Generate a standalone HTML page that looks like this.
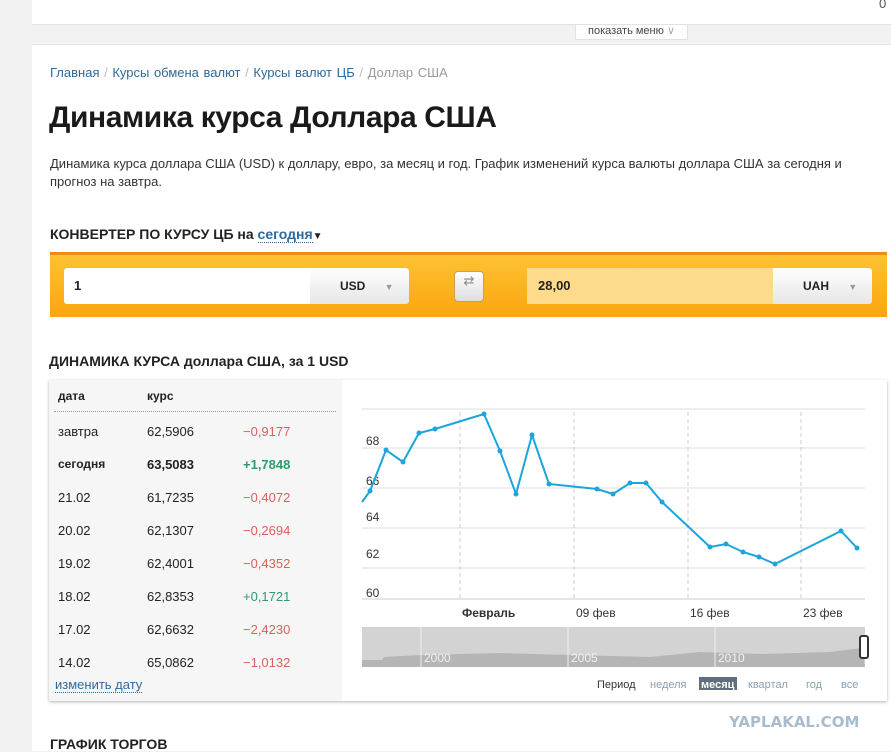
<!DOCTYPE html><html><head><meta charset="utf-8"><style>
*{margin:0;padding:0;box-sizing:border-box}
body{width:891px;height:751px;overflow:hidden;background:#f2f2f2;font-family:"Liberation Sans","DejaVu Sans",sans-serif;position:relative;color:#222}
.a{position:absolute;white-space:nowrap}
.tbl div{position:absolute;font-size:13px}
.r{color:#d9625a}.g{color:#2f9a6e}
</style></head><body>
<div class="a" style="left:32px;top:0;width:859px;height:25px;background:#fff;border-bottom:1px solid #e2e2e2"></div>
<div class="a" style="left:879px;top:-4px;font-size:13px;color:#555">0</div>
<div class="a" style="left:575px;top:25px;width:113px;height:15px;background:#fff;border:1px solid #e2e2e2;border-top:none;font-size:11px;color:#444;text-align:center;line-height:13px">показать меню <span style="color:#aaa">∨</span></div>
<div class="a" style="left:32px;top:44px;width:859px;height:707px;background:#fff;border-top:1px solid #e6e6e6"></div>
<div class="a" style="left:50px;top:65px;font-size:13px;color:#2e6a9c;word-spacing:1px">Главная <span style="color:#bbb">/</span> Курсы обмена валют <span style="color:#bbb">/</span> Курсы валют ЦБ <span style="color:#bbb">/</span> <span style="color:#999">Доллар США</span></div>
<div class="a" style="left:49px;top:101px;font-size:30px;font-weight:bold;color:#1a1a1a;letter-spacing:-0.4px">Динамика курса Доллара США</div>
<div class="a" style="left:50px;top:155px;font-size:13px;line-height:18px;color:#333;white-space:normal;width:820px">Динамика курса доллара США (USD) к доллару, евро, за месяц и год. График изменений курса валюты доллара США за сегодня и прогноз на завтра.</div>
<div class="a" style="left:50px;top:226px;font-size:14px;font-weight:bold">КОНВЕРТЕР ПО КУРСУ ЦБ на <span style="color:#2e6a9c;border-bottom:1px dotted #2e6a9c">сегодня</span><span style="font-size:10px">▼</span></div>
<div class="a" style="left:50px;top:252px;width:837px;height:65px;background:linear-gradient(#fdc233,#fba60e);border-top:3px solid #f08a10"></div>
<div class="a" style="left:64px;top:268px;width:246px;height:36px;background:#fff;border-radius:3px 0 0 3px;font-size:13px;font-weight:bold;line-height:36px;padding-left:10px">1</div>
<div class="a" style="left:310px;top:268px;width:99px;height:36px;background:linear-gradient(#fff,#e6e6e6);border-radius:0 3px 3px 0;font-size:12px;font-weight:bold;line-height:36px;padding-left:30px">USD <span style="color:#999;font-size:9px;margin-left:16px">▼</span></div>
<div class="a" style="left:454px;top:271px;width:30px;height:31px;background:linear-gradient(#fff,#ddd);border:1px solid #c9a050;border-radius:4px;color:#888;font-size:13px;text-align:center;line-height:13px;padding-top:2px">⇄</div>
<div class="a" style="left:527px;top:268px;width:246px;height:36px;background:#fedb8a;font-size:13px;font-weight:bold;line-height:36px;padding-left:11px">28,00</div>
<div class="a" style="left:773px;top:268px;width:99px;height:36px;background:linear-gradient(#fff,#e6e6e6);border-radius:0 3px 3px 0;font-size:12px;font-weight:bold;line-height:36px;padding-left:30px">UAH <span style="color:#999;font-size:9px;margin-left:16px">▼</span></div>
<div class="a" style="left:49px;top:353px;font-size:14px;font-weight:bold">ДИНАМИКА КУРСА доллара США, за 1 USD</div>
<div class="a" style="left:49px;top:380px;width:838px;height:321px;background:#fff;box-shadow:0 1px 3px rgba(0,0,0,.3)"></div>
<div class="a tbl" style="left:49px;top:380px;width:293px;height:321px;background:#f6f6f6">
<div style="left:9px;top:9px;font-weight:bold;font-size:12px">дата</div><div style="left:98px;top:9px;font-weight:bold;font-size:12px">курс</div>
<div style="left:5px;top:31px;width:282px;border-top:1px dotted #999"></div>
<div style="left:9px;top:44px">завтра</div><div style="left:98px;top:44px">62,5906</div><div class="r" style="left:194px;top:44px">−0,9177</div>
<div style="left:9px;top:77px;font-weight:bold;font-size:12px">сегодня</div><div style="left:98px;top:77px;font-weight:bold">63,5083</div><div class="g" style="left:194px;top:77px;font-weight:bold">+1,7848</div>
<div style="left:9px;top:110px">21.02</div><div style="left:98px;top:110px">61,7235</div><div class="r" style="left:194px;top:110px">−0,4072</div>
<div style="left:9px;top:143px">20.02</div><div style="left:98px;top:143px">62,1307</div><div class="r" style="left:194px;top:143px">−0,2694</div>
<div style="left:9px;top:176px">19.02</div><div style="left:98px;top:176px">62,4001</div><div class="r" style="left:194px;top:176px">−0,4352</div>
<div style="left:9px;top:209px">18.02</div><div style="left:98px;top:209px">62,8353</div><div class="g" style="left:194px;top:209px">+0,1721</div>
<div style="left:9px;top:242px">17.02</div><div style="left:98px;top:242px">62,6632</div><div class="r" style="left:194px;top:242px">−2,4230</div>
<div style="left:9px;top:275px">14.02</div><div style="left:98px;top:275px">65,0862</div><div class="r" style="left:194px;top:275px">−1,0132</div>
<div style="left:6px;top:297px;color:#2e6a9c;border-bottom:1px dotted #2e6a9c">изменить дату</div>
</div>
<svg class="a" style="left:0;top:0" width="891" height="751">
<g stroke="#ddd"><line x1="362" y1="409" x2="865" y2="409"/><line x1="362" y1="448" x2="865" y2="448"/><line x1="362" y1="488" x2="865" y2="488"/><line x1="362" y1="528" x2="865" y2="528"/><line x1="362" y1="568" x2="865" y2="568"/><line x1="362" y1="599" x2="865" y2="599" stroke="#ccc"/></g>
<g stroke="#ccc" stroke-dasharray="4,3"><line x1="460" y1="412" x2="460" y2="598"/><line x1="574" y1="412" x2="574" y2="598"/><line x1="688" y1="412" x2="688" y2="598"/><line x1="801" y1="412" x2="801" y2="598"/></g>
<g font-size="12" fill="#333" font-family="Liberation Sans,sans-serif"><text x="366" y="445">68</text><text x="366" y="485">66</text><text x="366" y="521">64</text><text x="366" y="558">62</text><text x="366" y="597">60</text>
<text x="462" y="617" font-weight="bold">Февраль</text><text x="576" y="617">09 фев</text><text x="690" y="617">16 фев</text><text x="803" y="617">23 фев</text></g>
<polyline fill="none" stroke="#1ba5dc" stroke-width="2" points="362,502 370,491 386,450 403,462 419,433 435,429 484,414 500,451 516,494 532,435 549,484 597,489 613,494 630,483 646,483 662,502 710,547 726,544 743,552 759,557 775,564 841,531 857,548"/>
<g fill="#1ba5dc"><circle cx="370" cy="491" r="2.5"/><circle cx="386" cy="450" r="2.5"/><circle cx="403" cy="462" r="2.5"/><circle cx="419" cy="433" r="2.5"/><circle cx="435" cy="429" r="2.5"/><circle cx="484" cy="414" r="2.5"/><circle cx="500" cy="451" r="2.5"/><circle cx="516" cy="494" r="2.5"/><circle cx="532" cy="435" r="2.5"/><circle cx="549" cy="484" r="2.5"/><circle cx="597" cy="489" r="2.5"/><circle cx="613" cy="494" r="2.5"/><circle cx="630" cy="483" r="2.5"/><circle cx="646" cy="483" r="2.5"/><circle cx="662" cy="502" r="2.5"/><circle cx="710" cy="547" r="2.5"/><circle cx="726" cy="544" r="2.5"/><circle cx="743" cy="552" r="2.5"/><circle cx="759" cy="557" r="2.5"/><circle cx="775" cy="564" r="2.5"/><circle cx="841" cy="531" r="2.5"/><circle cx="857" cy="548" r="2.5"/></g>
<rect x="362" y="627" width="503" height="40" fill="#d3d3d3"/>
<path d="M362,667 L362,660 L382,660 L384,657 L420,655 L500,653 L570,655 L650,657 L700,652 L760,654 L830,652 L862,648 L865,667Z" fill="#b5b5b5"/>
<g stroke="#f0f0f0"><line x1="421" y1="627" x2="421" y2="667"/><line x1="568" y1="627" x2="568" y2="667"/><line x1="715" y1="627" x2="715" y2="667"/></g>
<g font-size="12" fill="#f2f2f2"><text x="424" y="662">2000</text><text x="571" y="662">2005</text><text x="718" y="662">2010</text></g>
<rect x="860" y="636" width="8" height="22" fill="#fff" stroke="#333" stroke-width="2" rx="2"/>
<g font-size="11" font-family="Liberation Sans,sans-serif"><text x="597" y="688" fill="#333">Период</text><text x="650" y="688" fill="#8aa0b4">неделя</text><rect x="699" y="677" width="38" height="13" fill="#5d6e7e"/><text x="701" y="688" fill="#fff" font-weight="bold">месяц</text><text x="748" y="688" fill="#8aa0b4">квартал</text><text x="806" y="688" fill="#8aa0b4">год</text><text x="841" y="688" fill="#8aa0b4">все</text></g>
<text x="729" y="727" font-size="15" font-weight="bold" fill="#a9bccd" font-family="DejaVu Sans,sans-serif">YAPLAKAL.COM</text>
</svg>
<div class="a" style="left:50px;top:736px;font-size:14px;font-weight:bold">ГРАФИК ТОРГОВ</div>
</body></html>
